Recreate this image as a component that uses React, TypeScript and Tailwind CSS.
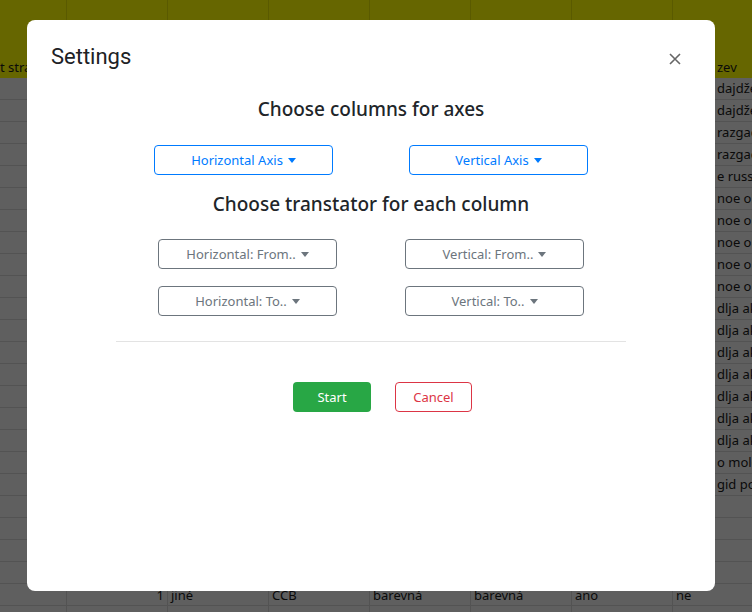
const lastCol = [
  "dajdžest",
  "dajdžest",
  "razgadka",
  "razgadka",
  "e russkij",
  "noe obučenie",
  "noe obučenie",
  "noe obučenie",
  "noe obučenie",
  "noe obučenie",
  "dlja akcij",
  "dlja akcij",
  "dlja akcij",
  "dlja akcij",
  "dlja akcij",
  "dlja akcij",
  "dlja akcij",
  "o molodeži",
  "gid po",
  "",
  "",
  "",
  "",
];

const bottomRow = ["", "1", "jiné", "CCB", "barevná", "barevná", "ano", "ne"];

const Caret = () => (
  <span className="ml-[5px] inline-block h-0 w-0 border-x-[4px] border-t-[5px] border-x-transparent border-t-current align-[2px]" />
);

const Sheet = () => (
  <div
    className="w-[774px] text-[13px] text-[#0a0a0a]"
    style={{ fontFamily: '"Noto Sans", "Liberation Sans", sans-serif' }}
  >
    <div className="grid h-[78px] grid-cols-[67px_repeat(7,101px)] bg-[#666600]">
      {["t strana", "", "", "", "", "", "", "zev"].map((t, i) => (
        <div
          key={i}
          className={`flex items-end overflow-hidden whitespace-nowrap border-r border-[#5a5a00] pb-[1px] leading-[20px] ${
            i === 0 ? "pl-0" : i === 7 ? "pl-[44px]" : "pl-[3px]"
          }`}
        >
          {t}
        </div>
      ))}
    </div>
    {lastCol.map((t, r) => (
      <div
        key={r}
        className="grid h-[22px] grid-cols-[67px_repeat(7,101px)] border-b border-[#535353] bg-[#5f5f5f]"
      >
        {[0, 1, 2, 3, 4, 5, 6, 7].map((c) => (
          <div
            key={c}
            className={`overflow-hidden whitespace-nowrap border-r border-[#535353] leading-[21px] ${
              c === 7 ? "pl-[44px]" : "pl-[3px]"
            }`}
          >
            {c === 7 ? t : ""}
          </div>
        ))}
      </div>
    ))}
    <div className="grid h-[22px] grid-cols-[67px_repeat(7,101px)] border-b border-[#535353] bg-[#5f5f5f]">
      {bottomRow.map((t, c) => (
        <div
          key={c}
          className={`overflow-hidden whitespace-nowrap border-r border-[#535353] leading-[23px] ${
            c === 1 ? "pr-[3px] text-right" : "pl-[3px]"
          }`}
        >
          {t}
        </div>
      ))}
    </div>
    <div className="grid h-[22px] grid-cols-[67px_repeat(7,101px)] bg-[#5f5f5f]">
      {[0, 1, 2, 3, 4, 5, 6, 7].map((c) => (
        <div key={c} className="border-r border-[#535353]" />
      ))}
    </div>
  </div>
);

const OutlineButton = ({
  label,
  tone,
}: {
  label: string;
  tone: "primary" | "secondary";
}) => (
  <button
    className={`flex h-[30px] w-[179px] items-center justify-center rounded border pt-px text-[13px] ${
      tone === "primary"
        ? "border-[#007bff] text-[#007bff]"
        : "border-[#6c757d] text-[#6c757d]"
    }`}
  >
    {label}
    <Caret />
  </button>
);

const SettingsModal = () => (
  <div
    className="absolute left-[27px] top-[20px] flex h-[571px] w-[688px] flex-col rounded-lg bg-white"
    style={{ fontFamily: '"Noto Sans", "Open Sans", sans-serif' }}
  >
    <div className="flex items-center justify-between pl-6 pr-[34px] pt-[23px]">
      <h2
        className="text-[22px] leading-[28px] text-[#202124]"
        style={{ fontFamily: 'Roboto, "Noto Sans", sans-serif' }}
      >
        Settings
      </h2>
      <svg width="12" height="12" viewBox="0 0 12 12" className="mt-[3px]">
        <path d="M1 1L11 11M11 1L1 11" stroke="#666" strokeWidth="1.6" />
      </svg>
    </div>

    <h3 className="mt-6 text-center text-[19px] font-medium leading-[28px] text-[#212529]">
      Choose columns for axes
    </h3>
    <div className="mx-auto mt-[22px] flex w-[510px]">
      <div className="flex flex-1 justify-center">
        <OutlineButton label="Horizontal Axis" tone="primary" />
      </div>
      <div className="flex flex-1 justify-center">
        <OutlineButton label="Vertical Axis" tone="primary" />
      </div>
    </div>

    <h3 className="mt-[15px] text-center text-[19px] font-medium leading-[28px] text-[#212529]">
      Choose transtator for each column
    </h3>
    <div className="mx-auto mt-[21px] grid w-[494px] grid-cols-2 gap-y-[17px]">
      <div className="flex justify-center">
        <OutlineButton label="Horizontal: From.." tone="secondary" />
      </div>
      <div className="flex justify-center">
        <OutlineButton label="Vertical: From.." tone="secondary" />
      </div>
      <div className="flex justify-center">
        <OutlineButton label="Horizontal: To.." tone="secondary" />
      </div>
      <div className="flex justify-center">
        <OutlineButton label="Vertical: To.." tone="secondary" />
      </div>
    </div>

    <hr className="mx-auto mt-[25px] w-[510px] border-[#e3e3e3]" />

    <div className="mt-10 flex justify-center gap-6 pl-[23px]">
      <button className="h-[30px] w-[78px] rounded bg-[#28a745] pt-[2px] text-[13px] text-white">
        Start
      </button>
      <button className="h-[30px] w-[77px] rounded border border-[#dc3545] pt-[2px] text-[13px] text-[#dc3545]">
        Cancel
      </button>
    </div>
  </div>
);

export default function App() {
  return (
    <div className="relative h-[612px] w-[752px] overflow-hidden bg-[#5f5f5f]">
      <Sheet />
      <SettingsModal />
    </div>
  );
}
